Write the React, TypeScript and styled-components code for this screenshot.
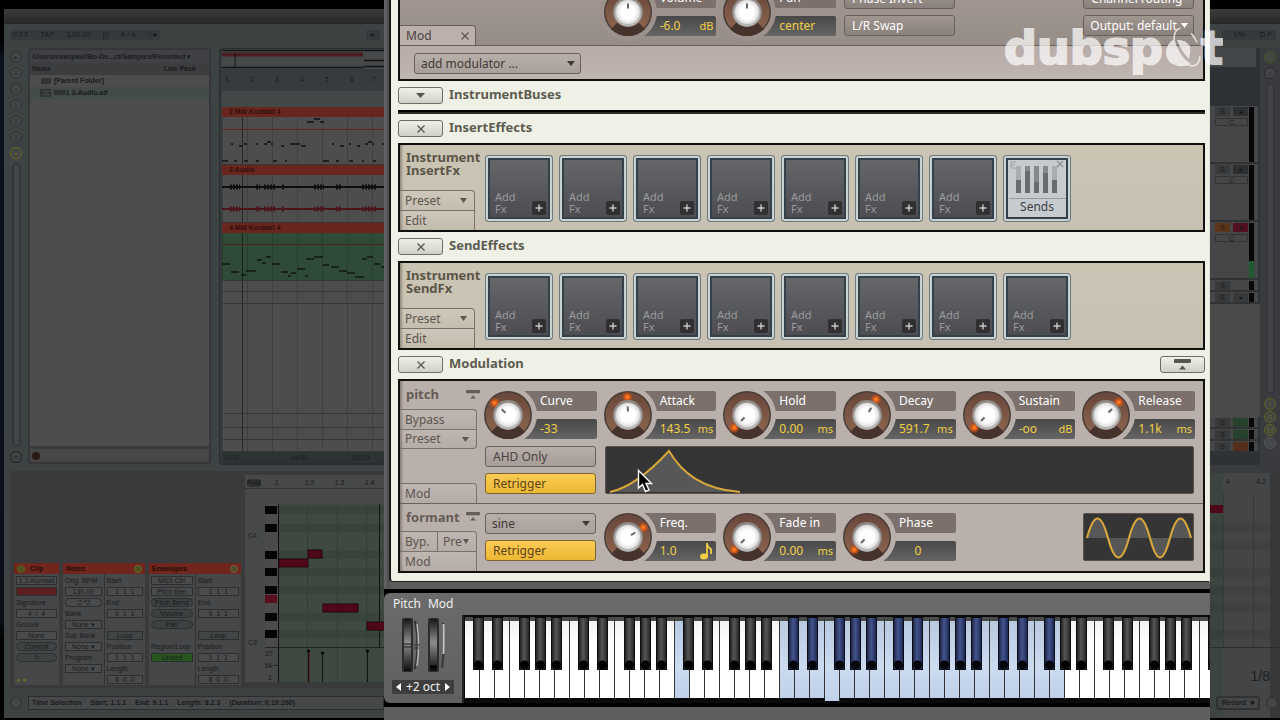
import React from "react";
import styled, { createGlobalStyle, css } from "styled-components";

const GlobalStyle = createGlobalStyle`
  * { box-sizing: border-box; }
  html, body { margin: 0; background: #000; }
  body { font-family: "Noto Sans", "Open Sans", sans-serif; font-size: 12px; }
  button, input, select { font: inherit; color: inherit; margin: 0; padding: 0; border: 0; background: none; border-radius: 0; }
  ul { list-style: none; margin: 0; padding: 0; }
  h2, h3, p { margin: 0; font: inherit; }
  svg { display: block; }
`;

/* ---------- page ---------- */

const Desktop = styled.main`
  position: relative;
  display: grid;
  grid-template-columns: 384px minmax(0, 1fr) 70px;
  min-height: 100vh;
  background: #000;
  overflow: hidden;
`;

/* ---------- sampler window ---------- */

const Sampler = styled.section`
  display: flex;
  flex-direction: column;
  background: #5f5f5f;
  color: #4a423f;
`;

const RackFrame = styled.div`
  padding: 0 0 7px 5px;
  background: linear-gradient(90deg, #66656a, #4f4f50 5px, #5c5d5c 6px);
  border-bottom: 4px solid #000;
`;

const Rack = styled.div`
  padding: 0 4px 8px 7px;
  background: #eff1e6;
  border-left: 2px solid #17191a;
  border-bottom: 1px solid #20241f;
  border-right: 1px solid #dfe3d8;
  border-bottom-left-radius: 4px;
`;

const Panel = styled.div<{ $tone: string; $open?: boolean }>`
  border: 2px solid #10100e;
  ${(p) => p.$open && "border-top: 0;"}
  background: ${(p) => p.$tone};
  box-shadow: inset 3px 0 2px -1px rgba(60, 50, 40, 0.35);
`;

const SectionHead = styled.header`
  display: flex;
  align-items: center;
  gap: 6px;
  height: 29px;
`;

const SectionTitle = styled.h2`
  flex: 1;
  font-size: 13px;
  font-weight: 700;
  line-height: 16px;
  color: #5d5b50;
  padding-bottom: 4px;
`;

const SmallButton = styled.button`
  display: flex;
  align-items: center;
  justify-content: center;
  width: 45px;
  height: 17px;
  border: 1px solid #6d6f66;
  border-radius: 3px;
  background: linear-gradient(#f0f1ea, #cfd0c6);
  color: #55564f;
`;

const Divider = styled.div`
  height: 4px;
  background: linear-gradient(#000 2px, #2b2b24 2px);
`;

const Triangle = ({ size = 9, up = false }: { size?: number; up?: boolean }) => (
  <svg width={size} height={5} viewBox="0 0 10 5" preserveAspectRatio="none" aria-hidden="true">
    <path d={up ? "M0 5L5 0L10 5Z" : "M0 0H10L5 5Z"} fill="currentColor" />
  </svg>
);

const Cross = () => (
  <svg width="8" height="8" viewBox="0 0 8 8" aria-hidden="true">
    <path d="M0.5 0.5L7.5 7.5M7.5 0.5L0.5 7.5" stroke="currentColor" strokeWidth="1.200" />
  </svg>
);

const CollapseIcon = () => (
  <svg width="17" height="11" viewBox="0 0 17 11" aria-hidden="true">
    <rect width="17" height="4" rx="1" fill="currentColor" />
    <path d="M5 10.500L8.500 6.500L12 10.500Z" fill="currentColor" />
  </svg>
);

/* top strip with output controls */

const TopStrip = styled.div`
  display: flex;
  align-items: flex-end;
  gap: 9px;
  height: 46px;
  overflow: hidden;
  border-bottom: 1px solid #6b5f5a;
  background: linear-gradient(#a0968f, #978d88);
`;

const ModTab = styled.div`
  display: flex;
  flex: 0 0 76px;
  align-items: center;
  justify-content: space-between;
  height: 20px;
  padding: 0 6px;
  border: 1px solid #6b5f5a;
  border-left: 0;
  border-bottom: 0;
  border-top-right-radius: 4px;
  background: #bbb0ac;
  line-height: 18px;
`;

const IconButton = styled.button`
  display: flex;
  color: #5c534f;
`;

const ModStrip = styled.div`
  padding: 7px 14px 5px;
  background: linear-gradient(#b8aca8, #bfb4b0);
`;

const ParamGrid = styled.div<{ $pad?: string }>`
  flex: 1;
  display: grid;
  grid-template-columns: repeat(6, minmax(0, 1fr));
  gap: 7px 8px;
  min-width: 0;
  padding: ${(p) => p.$pad ?? "0"};
`;

const Stack = styled.div`
  display: flex;
  flex-direction: column;
  justify-content: space-between;
  height: 48px;
  padding-right: 1px;
`;

const RackButton = styled.button<{ $look?: "lit" | "light" }>`
  height: 21px;
  padding: 0 7px;
  border: 1px solid #6a605b;
  border-radius: 3px;
  background: linear-gradient(#b9afaa, #a69c98);
  color: #4a423f;
  line-height: 18px;
  text-align: left;
  white-space: nowrap;
  ${(p) =>
    p.$look === "lit" &&
    css`
      background: linear-gradient(#fbcb54, #edb834);
      border-color: #7c6430;
      color: #5b4318;
    `}
  ${(p) =>
    p.$look === "light" &&
    css`
      background: linear-gradient(#a0958f, #8b817c);
      color: #fff;
    `}
`;

const SelectBox = styled.div<{ $width?: string; $look?: "light" }>`
  position: relative;
  width: ${(p) => p.$width ?? "100%"};
  color: ${(p) => (p.$look === "light" ? "#fff" : "#3f3835")};
  select {
    display: block;
    width: 100%;
    height: 21px;
    padding: 0 6px;
    appearance: none;
    border: 1px solid #6a605b;
    border-radius: 3px;
    background: ${(p) => (p.$look === "light" ? "linear-gradient(#a0958f, #8b817c)" : "linear-gradient(#b9afaa, #aaa09b)")};
    line-height: 18px;
  }
  svg {
    position: absolute;
    right: 6px;
    top: 8px;
    pointer-events: none;
  }
`;

const Select = ({ label, value, width, look }: { label: string; value: string; width?: string; look?: "light" }) => (
  <SelectBox $width={width} $look={look}>
    <select aria-label={label} defaultValue={value}>
      <option>{value}</option>
    </select>
    <Triangle size={look ? 7 : 8} />
  </SelectBox>
);

/* knob with caption and readout */

const ParamBox = styled.div`
  position: relative;
  display: flex;
  height: 48px;
`;

const KnobSvg = styled.svg`
  position: relative;
  flex: 0 0 48px;
  margin-left: -1px;
  overflow: visible;
`;

const ParamText = styled.div`
  flex: 1;
  display: flex;
  flex-direction: column;
  justify-content: space-between;
  min-width: 0;
  margin-left: -12px;
  order: 1;
`;

const Caption = styled.div`
  height: 20px;
  padding-left: 20px;
  border-radius: 2px;
  background: #7b706c;
  color: #fff;
  line-height: 19px;
  white-space: nowrap;
`;

const Readout = styled.output<{ $spread?: boolean }>`
  display: flex;
  justify-content: ${(p) => (p.$spread ? "center" : "space-between")};
  align-items: center;
  height: 20px;
  padding: 0 3px 0 ${(p) => (p.$spread ? "4px" : "20px")};
  border-radius: 2px;
  background: linear-gradient(#484848, #656565);
  color: #f2cf45;
  line-height: 20px;
  white-space: nowrap;
`;

const Unit = styled.span`
  font-size: 11px;
`;

type ParamProps = {
  name: string;
  value: string;
  unit?: React.ReactNode;
  angle: number;
  ground?: string;
  glow?: boolean;
  centred?: boolean;
};

const Param = ({ name, value, unit, angle, ground = "#b9b0ab", glow = true, centred }: ParamProps) => (
  <ParamBox>
    <ParamText>
      <Caption>{name}</Caption>
      <Readout $spread={centred}>
        <span>{value}</span>
        {unit && <Unit>{unit}</Unit>}
      </Readout>
    </ParamText>
    <KnobSvg width="48" height="48" viewBox="0 0 48 48" role="img" aria-label={`${name} knob`}>
      <defs>
        <radialGradient id="cap">
          <stop offset="0.6" stopColor="#fff" />
          <stop offset="1" stopColor="#dcdcdc" />
        </radialGradient>
        <radialGradient id="spark">
          <stop offset="0" stopColor="#ff9236" />
          <stop offset="0.35" stopColor="#ee5f14" />
          <stop offset="1" stopColor="#a0441c" stopOpacity="0" />
        </radialGradient>
        <linearGradient id="ring" x2="0" y2="1">
          <stop offset="0" stopColor="#6b493c" />
          <stop offset="1" stopColor="#8c654f" />
        </linearGradient>
      </defs>
      <circle cx="24" cy="24" r="29" fill={ground} />
      <circle cx="24" cy="24" r="24" fill="#4a3d38" />
      <circle cx="24" cy="24" r="18.500" fill="none" stroke="url(#ring)" strokeWidth="8" />
      <path d="M24 24L7 41A24 24 0 0 0 41 41Z" fill="#46332c" />
      {glow && (
        <g transform={`rotate(${angle} 24 24)`}>
          <circle cx="24" cy="6" r="6" fill="url(#spark)" />
        </g>
      )}
      <circle cx="24" cy="24" r="15" fill="#8f8986" />
      <circle cx="24" cy="25" r="13.500" fill="#b9b7b6" />
      <circle cx="24" cy="24" r="12" fill="url(#cap)" />
      <path d="M24 15.500V20.500" stroke="#666" strokeWidth="2" transform={`rotate(${angle} 24 24)`} />
    </KnobSvg>
  </ParamBox>
);

/* effect slots */

const FxRow = styled.div`
  display: flex;
  height: 85px;
`;

const Side = styled.div`
  display: flex;
  flex: 0 0 85px;
  flex-direction: column;
`;

const SideTitle = styled.h3`
  flex: 1;
  padding: 6px 0 0 6px;
  color: #5b5548;
  font-size: 13px;
  font-weight: 700;
  line-height: 13px;
`;

const SideTab = styled.button<{ $width: number; $cap?: boolean; $foot?: boolean }>`
  display: flex;
  align-items: center;
  justify-content: space-between;
  width: ${(p) => p.$width}px;
  height: 20px;
  padding: 0 7px 0 5px;
  border: solid #7a716a;
  border-width: 1px 1px ${(p) => (p.$foot ? "1px" : "0")} 0;
  ${(p) => p.$cap && "border-top-right-radius: 4px;"}
  ${(p) => p.$foot && "border-bottom-right-radius: 4px;"}
  background: linear-gradient(rgba(255, 255, 255, 0.08), rgba(0, 0, 0, 0.02));
  color: #5c544d;
  line-height: 18px;
  white-space: nowrap;
`;

const Slots = styled.ul`
  display: flex;
  flex-wrap: wrap;
  gap: 6px;
  padding-top: 10px;
  overflow: hidden;
`;

const SlotButton = styled.button<{ $filled?: boolean }>`
  display: flex;
  flex-direction: ${(p) => (p.$filled ? "column" : "row")};
  align-items: ${(p) => (p.$filled ? "center" : "flex-end")};
  justify-content: space-between;
  width: 68px;
  height: 67px;
  padding: ${(p) => (p.$filled ? "2px 2px 0" : "0 3px 3px 9px")};
  border: 1px solid #6d7b80;
  border-radius: 3px;
  outline: 2px solid #34414a;
  outline-offset: -5px;
  box-shadow: inset 0 0 0 2px #c9d2d0;
  background: ${(p) => (p.$filled ? "#c6cbd0" : "linear-gradient(#66686a, #4b4b50)")};
  color: ${(p) => (p.$filled ? "#3d3f44" : "#9a9a9a")};
  text-align: left;
`;

const SlotLabel = styled.span`
  padding-bottom: 3px;
  font-size: 11px;
  line-height: 12px;
`;

const Plus = styled.span`
  display: flex;
  align-items: center;
  justify-content: center;
  width: 14px;
  height: 14px;
  margin: 0 3px 3px 0;
  border-radius: 2px;
  background: #303033;
`;

const SendsName = styled.span`
  width: 57px;
  padding-bottom: 6px;
  border-top: 1px solid #9a9da1;
  line-height: 16px;
  text-align: center;
`;

const EmptySlot = () => (
  <li>
    <SlotButton>
      <SlotLabel>
        Add
        <br />
        Fx
      </SlotLabel>
      <Plus>
        <svg width="8" height="8" aria-hidden="true">
          <path d="M4 0.500V7.500M0.500 4H7.500" stroke="#c9c9c9" strokeWidth="1.400" />
        </svg>
      </Plus>
    </SlotButton>
  </li>
);

const SendsSlot = () => (
  <li>
    <SlotButton $filled>
      <svg width="57" height="40" aria-hidden="true">
        <path d="M2 4H7M2 7H6M2 10H7M2 4V10" stroke="#9ea2a6" fill="none" />
        <path d="M48 3L54 9M54 3L48 9" stroke="#8c9095" strokeWidth="1.300" />
        {[7, 16, 25, 34, 43].map((x, i) => (
          <g key={x}>
            <rect x={x} y="8" width="5" height="27" fill={i === 0 || i === 4 ? "#a9adb0" : "#85898c"} />
            <rect x={x} y={[22, 13, 24, 15, 22][i]} width="5" height={[13, 22, 11, 20, 13][i]} fill="#686b6f" />
          </g>
        ))}
      </svg>
      <SendsName>Sends</SendsName>
    </SlotButton>
  </li>
);

const FxPanel = ({ name, count, sends }: { name: string; count: number; sends?: boolean }) => (
  <Panel $tone="linear-gradient(#cbc5b4, #c7c1b3)">
    <FxRow>
      <Side>
        <SideTitle>
          Instrument
          <br />
          {name}
        </SideTitle>
        <SideTab $width={75} $cap>
          Preset <Triangle size={7} />
        </SideTab>
        <SideTab $width={75}>Edit</SideTab>
      </Side>
      <Slots>
        {Array.from({ length: count }, (_, i) => (
          <EmptySlot key={i} />
        ))}
        {sends && <SendsSlot />}
      </Slots>
    </FxRow>
  </Panel>
);

/* modulation */

const ModRow = styled.div<{ $line?: boolean }>`
  display: flex;
  ${(p) => p.$line && "border-bottom: 1px solid #6d5f59;"}
`;

const ModName = styled.div<{ $height: number }>`
  display: flex;
  align-items: center;
  justify-content: space-between;
  width: 80px;
  height: ${(p) => p.$height}px;
  padding: 0 0 2px 6px;
  color: #665c57;
  font-size: 13px;
  font-weight: 700;
  line-height: 16px;
  svg { width: 14px; }
`;

const Spacer = styled.div`
  flex: 1;
`;

const TabPair = styled.div`
  display: flex;
`;

const Display = styled.div<{ $span?: string }>`
  grid-column: ${(p) => p.$span ?? "auto"};
  height: 48px;
  margin-right: 1px;
  border: 1px solid #5a524e;
  border-radius: 2px;
  background: #353535;
  overflow: hidden;
`;

const Cursor = styled.svg`
  position: absolute;
  left: 637px;
  top: 469px;
`;

/* keyboard */

const KeyPanel = styled.div`
  display: flex;
  height: 110px;
  border-radius: 6px 0 0 6px;
  background: linear-gradient(#6b6b6b, #606060);
`;

const KeyShell = styled.div`
  background: #000;
  border-bottom: 4px solid #000;
`;

const WheelArea = styled.div`
  display: flex;
  flex: 0 0 78px;
  flex-direction: column;
  gap: 5px;
  padding: 2px 8px 9px;
  color: #f0f0f0;
`;

const WheelNames = styled.div`
  display: flex;
  gap: 7px;
  padding-left: 1px;
  line-height: 18px;
`;

const Octave = styled.div`
  display: flex;
  align-items: center;
  justify-content: space-between;
  width: 62px;
  height: 14px;
  margin-top: auto;
  padding: 0 4px;
  background: #3d3d3d;
  line-height: 14px;
  white-space: nowrap;
  button { display: flex; }
`;

const Keys = styled.ul`
  flex: 1;
  display: flex;
  min-width: 0;
  margin-top: 22px;
  padding: 2px 0 5px 1px;
  overflow: hidden;
  border-left: 2px solid #222;
  background: #0a0a0a;
`;

const KeySlot = styled.li`
  position: relative;
  flex: 0 0 15px;
`;

const WhiteKey = styled.button<{ $blue?: boolean; $down?: boolean }>`
  display: block;
  width: 15px;
  height: ${(p) => (p.$down ? 84 : 81)}px;
  border-top: 4px solid #4a4a48;
  border-right: 1px solid #333;
  background: ${(p) => (p.$blue ? "linear-gradient(#b9c9e0, #cbdbf0 60%, #bfd0e8)" : "linear-gradient(#f2f2f2, #fff 30%)")};
`;

const BlackKey = styled.button<{ $x: number; $blue?: boolean }>`
  position: absolute;
  z-index: 1;
  left: ${(p) => p.$x}px;
  top: 0;
  width: 11px;
  height: 53px;
  border: 1px solid #0c0c10;
  background: ${(p) =>
    p.$blue
      ? "radial-gradient(circle at 50% 47px, #05060c 4px, transparent 5px), linear-gradient(90deg, #1d2748, #44558c 45%, #1e2a58)"
      : "radial-gradient(circle at 50% 47px, #000 4px, transparent 5px), linear-gradient(90deg, #222, #565656 45%, #262626)"};
`;

const BLACK_OFFSETS: Record<number, number> = { 0: 8, 1: 12, 3: 9, 4: 10, 5: 11 };

const Keyboard = () => (
  <Keys aria-label="Keyboard">
    {Array.from({ length: 75 }, (_, i) => {
      const blue = i === 14 || (i >= 21 && i < 40);
      const offset = BLACK_OFFSETS[i % 7];
      return (
        <KeySlot key={i}>
          <WhiteKey $blue={blue} $down={i === 24} aria-label={`White key ${i + 1}`} />
          {offset !== undefined && <BlackKey $x={offset} $blue={i >= 21 && i < 39} aria-label={`Black key ${i + 1}`} />}
        </KeySlot>
      );
    })}
  </Keys>
);

const Wheels = () => (
  <svg width="62" height="54" viewBox="0 0 62 54" role="img" aria-label="Pitch and modulation wheels">
    <defs>
      <linearGradient id="wheel" x2="0" y2="1">
        <stop offset="0" stopColor="#181818" />
        <stop offset="0.45" stopColor="#8c8c8c" />
        <stop offset="0.55" stopColor="#777" />
        <stop offset="1" stopColor="#0d0d0d" />
      </linearGradient>
    </defs>
    <rect x="10" y="0" width="11" height="54" rx="2" fill="#2c2c2c" />
    <rect x="12" y="1" width="7" height="52" fill="url(#wheel)" />
    <path d="M11 26H20M11 29H20" stroke="#222" />
    <path d="M23 3Q28 27 23 51" fill="none" stroke="#333" strokeWidth="2" />
    <path d="M25 6Q28 27 25 48" fill="none" stroke="#b5b5b5" strokeWidth="1.500" />
    <path d="M22 27H28M22 30H27" stroke="#333" />
    <rect x="36" y="0" width="11" height="54" rx="2" fill="#2c2c2c" />
    <rect x="38" y="1" width="7" height="52" fill="url(#wheel)" />
    <path d="M38 49H45" stroke="#000" strokeWidth="3" />
    <path d="M50 50Q53 27 51 5" fill="none" stroke="#3d3d3d" strokeWidth="2.500" />
    <path d="M51.500 6Q52 18 51.500 36" fill="none" stroke="#c5c5c5" strokeWidth="2" />
  </svg>
);

/* ---------- dimmed sequencer behind the sampler ---------- */

const Daw = styled.section<{ $left?: boolean }>`
  display: flex;
  flex-direction: column;
  min-width: 0;
  padding: 9px 0 8px ${(p) => (p.$left ? "4px" : "0")};
  background: ${(p) => (p.$left ? "linear-gradient(#000 40px, #0b1320 60px, #0a0e17 620px, #000 640px)" : "#000")};
  color: #1a1b1c;
  font-family: "Liberation Sans", sans-serif;
  font-size: 7px;
  line-height: 10px;
  overflow: hidden;
  white-space: nowrap;
`;

const DawBody = styled.div`
  flex: 1;
  display: flex;
  flex-direction: column;
  background: #3d4243;
`;

const DawTitle = styled.div`
  height: 15px;
  background: linear-gradient(#3a3a3a, #2a2a2b);
  border-bottom: 1px solid #242525;
`;

const Transport = styled.div`
  display: flex;
  align-items: center;
  justify-content: space-between;
  height: 24px;
  padding: 0 4px 2px 6px;
`;

const TransportBox = styled.div<{ $width: number; $wide?: boolean }>`
  display: flex;
  gap: 6px;
  align-items: center;
  justify-content: ${(p) => (p.$wide ? "space-between" : "center")};
  width: ${(p) => p.$width}px;
  height: 10px;
  padding: 0 3px;
  border-radius: 2px;
  background: #36393b;
  color: #1a1c1d;
  font-size: 8px;
`;

const DawMain = styled.div`
  display: flex;
  height: 418px;
  gap: 2px;
`;

const IconColumn = styled.div`
  display: flex;
  flex: 0 0 22px;
  flex-direction: column;
  align-items: center;
  gap: 4px;
  padding: 3px 0 3px 2px;
`;

const RoundButton = styled.button<{ $color?: string }>`
  flex: 0 0 12px;
  width: 12px;
  height: 12px;
  border: 1px solid ${(p) => p.$color ?? "#2f3133"};
  border-radius: 6px;
  background: #444546;
  color: ${(p) => p.$color ?? "#2f3133"};
  font-size: 8px;
  line-height: 9px;
  text-align: center;
`;

const Track = styled.div`
  flex: 1;
  width: 9px;
  border-radius: 5px;
  background: #434445;
  border: 2px solid #36363a;
`;

const Browser = styled.div`
  display: flex;
  flex: 0 0 183px;
  flex-direction: column;
  min-width: 0;
  height: 416px;
  border: 2px solid #35353a;
  border-radius: 3px;
  background: #4d4d4d;
  font-weight: 700;
  overflow: hidden;
`;

const BrowserLine = styled.div<{ $tone?: string; $height?: number }>`
  display: flex;
  align-items: center;
  gap: 3px;
  height: ${(p) => p.$height ?? 12}px;
  padding: 0 13px 0 2px;
  background: ${(p) => p.$tone ?? "none"};
`;

const BrowserFoot = styled.div`
  display: flex;
  align-items: center;
  height: 16px;
  padding-left: 2px;
  border-top: 3px solid #393a3b;
  background: #474748;
`;

const BrownDot = styled.span`
  width: 8px;
  height: 8px;
  border-radius: 4px;
  background: #2a1a14;
`;

const Arrangement = styled.div`
  display: flex;
  flex: 1;
  flex-direction: column;
  min-width: 0;
  height: 417px;
  margin-left: 6px;
  padding: 1px 0 0 2px;
  border: solid #2a2d30;
  border-width: 1px 0 2px 1px;
  border-radius: 4px 0 0 4px;
  background: #34393c;
  overflow: hidden;
`;

const Ruler = styled.div<{ $height: number; $tone: string; $step?: number }>`
  display: flex;
  align-items: center;
  height: ${(p) => p.$height}px;
  background: ${(p) => p.$tone};
  span { flex: 0 0 ${(p) => p.$step ?? 25}px; padding-left: 3px; }
`;

const ClipHead = styled.div`
  height: 10px;
  padding-left: 7px;
  background: #68261e;
  color: #30100d;
  font-weight: 700;
`;

const Lane = styled.div<{ $height?: number; $tone?: string; $line?: string }>`
  ${(p) => (p.$height ? `height: ${p.$height}px;` : "flex: 1;")}
  background-color: ${(p) => p.$tone ?? "#4d4d4d"};
  background-image: linear-gradient(90deg, rgba(0, 0, 0, 0.16) 1px, transparent 1px), linear-gradient(90deg, transparent 20px, rgba(0, 0, 0, 0.5) 20px, rgba(0, 0, 0, 0.5) 21px, transparent 21px);
  background-size: 25px 100%, 100% 100%;
  border-bottom: 1px solid ${(p) => p.$line ?? "#363636"};
  overflow: hidden;
`;

const dashes = (list: number[][]) => list.map(([x, y, w]) => `M${x} ${y}h${w}`).join("");

const ArrangeView = () => (
  <Arrangement>
    <svg width="166" height="19" aria-hidden="true">
      <rect width="166" height="19" fill="#46484a" />
      <path d="M0 0.500H166M0 17.500H142M142 10.500H166M142 16.500H166" stroke="#141414" strokeWidth="1.500" />
      <path d="M0 4.500H141" stroke="#4b1d20" strokeWidth="4" />
      <path d="M13 3V17" stroke="#151515" />
    </svg>
    <Ruler $height={22} $tone="#353b3f">
      {[1, 2, 3, 4, 5, 6].map((n) => (
        <span key={n}>{n}</span>
      ))}
      7
    </Ruler>
    <Ruler $height={16} $tone="#414847" />
    <ClipHead>2 Mid Kontakt 4</ClipHead>
    <Lane $height={13} $line="#5c2420">
      <svg width="166" height="12" aria-hidden="true">
        <path d={dashes([[85, 5, 7], [92, 2, 6], [98, 5, 4]])} stroke="#111" strokeWidth="1.500" />
      </svg>
    </Lane>
    <Lane $height={35}>
      <svg width="166" height="34" aria-hidden="true">
        <path
          d={dashes([[9, 14, 2], [17, 16, 4], [22, 14, 3], [34, 14, 2], [42, 14, 3], [45, 12, 4], [49, 14, 2], [59, 16, 3], [68, 14, 4], [72, 14, 6], [79, 16, 5], [110, 14, 2], [118, 16, 4], [127, 14, 2], [135, 16, 3], [143, 14, 3], [146, 12, 4], [150, 14, 2], [160, 14, 3], [0, 31, 6], [12, 31, 3], [22, 31, 4], [34, 31, 3], [51, 31, 4], [63, 31, 2], [101, 31, 6], [114, 31, 3], [127, 31, 4], [140, 31, 2], [151, 31, 3]])}
          stroke="#111"
          strokeWidth="1.500"
        />
      </svg>
    </Lane>
    <ClipHead>3 Audio</ClipHead>
    <Lane $height={48}>
      <svg width="166" height="47" aria-hidden="true">
        {[12, 34].map((y, i) => (
          <g key={y} stroke={i ? "#4a1418" : "#0e0e0e"}>
            <path d={`M0 ${y}H166`} strokeWidth="2" />
            <path d={`M8 ${y}h10M34 ${y}h4M42 ${y}h12M60 ${y}h3M92 ${y}h10M114 ${y}h6M140 ${y}h14`} strokeWidth="5" strokeDasharray="2 1" />
          </g>
        ))}
      </svg>
    </Lane>
    <ClipHead>4 Mid Kontakt 4</ClipHead>
    <Lane $height={12} $tone="#2f4b38" $line="#4b241c" />
    <Lane $height={36} $tone="#304a38">
      <svg width="166" height="35" aria-hidden="true">
        <path
          d={dashes([[0, 19, 8], [9, 27, 8], [19, 30, 5], [24, 26, 10], [35, 15, 5], [40, 18, 4], [44, 12, 5], [50, 19, 8], [59, 27, 7], [66, 31, 3], [69, 28, 5], [75, 24, 8], [83, 31, 3], [84, 14, 8], [92, 12, 9], [101, 20, 6], [109, 22, 8], [117, 26, 8], [125, 28, 8], [133, 32, 9], [140, 14, 5], [145, 12, 6], [152, 19, 6], [159, 22, 5]])}
          stroke="#101511"
          strokeWidth="1.500"
        />
      </svg>
    </Lane>
    <Lane $height={11} />
    <Lane $height={12} />
    <Lane />
    <Lane $height={14} />
    <Lane $height={12} />
    <Lane $height={12} />
    <Ruler $height={11} $tone="#2d3234" $step={65}>
      <span>0:00</span>
      <span>14:00</span>
      16:00
    </Ruler>
  </Arrangement>
);

const DetailArea = styled.div`
  display: flex;
  flex: 1;
  align-items: stretch;
  margin: 5px 0 7px 6px;
  background: #3a3a3d;
`;

const Devices = styled.div`
  display: flex;
  flex: 0 0 235px;
  align-items: flex-end;
  gap: 4px;
  padding: 0 4px 3px 4px;
`;

const Device = styled.div<{ $width: number }>`
  flex: 0 0 ${(p) => p.$width}px;
  height: 122px;
  background: #464748;
`;

const DeviceHead = styled.div`
  display: flex;
  align-items: center;
  justify-content: space-between;
  gap: 5px;
  height: 11px;
  padding: 0 3px;
  background: #70261c;
  color: #270d0a;
  font-weight: 700;
  button { flex-basis: 8px; width: 8px; height: 8px; background: #4e4f22; }
`;

const DeviceCols = styled.div`
  display: flex;
`;

const DeviceCol = styled.div`
  flex: 1;
  display: flex;
  flex-direction: column;
  gap: 2px;
  min-width: 0;
  padding: 2px;
  & + & { border-left: 1px solid #333; }
`;

const fieldTone = css<{ $tone?: string }>`
  width: 100%;
  height: 9px;
  border: 1px solid #2d2e2f;
  background: ${(p) => p.$tone ?? "#4a4b4c"};
  text-align: center;
  line-height: 7px;
`;

const Field = styled.input<{ $tone?: string }>`
  ${fieldTone}
`;

const Pill = styled.button<{ $tone?: string; $square?: boolean }>`
  ${fieldTone}
  border-radius: ${(p) => (p.$square ? "0" : "5px")};
`;

const Label = styled.p<{ $tone?: string }>`
  height: 9px;
  line-height: 9px;
  color: ${(p) => p.$tone ?? "inherit"};
`;

const PositionColumn = ({ owner }: { owner: string }) => (
  <DeviceCol>
    <Label>Start</Label>
    <Field aria-label={`${owner} start`} defaultValue="1  1  1" />
    <Label>End</Label>
    <Field aria-label={`${owner} end`} defaultValue="9  1  1" />
    <Label />
    <Pill $square $tone="#414546">
      Loop
    </Pill>
    <Label>Position</Label>
    <Field aria-label={`${owner} position`} defaultValue="1  1  1" />
    <Label>Length</Label>
    <Field aria-label={`${owner} length`} defaultValue="8  0  0" />
  </DeviceCol>
);

const Roll = styled.div`
  flex: 1;
  display: flex;
  flex-direction: column;
  min-width: 0;
  margin: 4px 0 6px;
  background: #474848;
`;

const RollHead = styled.div`
  display: flex;
  align-items: center;
  height: 14px;
  padding: 3px 0 0 2px;
  border-bottom: 1px solid #333;
  span { flex: 0 0 30px; }
`;

const RollBadge = styled.button`
  width: 20px;
  height: 8px;
  margin-right: 14px;
  border-radius: 3px;
  background: #2f3133;
  line-height: 8px;
`;

const RollBody = styled.div`
  display: flex;
  flex: 1;
  padding-top: 15px;
`;

const RollLabels = styled.div`
  display: flex;
  flex: 0 0 20px;
  flex-direction: column;
  gap: 97px;
  padding: 27px 0 2px 3px;
`;

const VelocityLabels = styled.svg`
  margin-top: auto;
`;

const DawStatus = styled.div`
  display: flex;
  align-items: center;
  gap: 6px;
  height: 20px;
  margin-bottom: 3px;
  padding: 0 0 4px 6px;
`;

const StatusBox = styled.div`
  display: flex;
  flex: 1;
  align-items: center;
  gap: 9px;
  height: 14px;
  padding: 0 3px;
  border: 1px solid #2b2c2d;
  background: #47484a;
  font-weight: 700;
`;

const PianoRoll = () => (
  <Roll>
    <RollHead>
      <RollBadge>Fold</RollBadge>
      <span>1</span>
      <span>1.2</span>
      <span>1.3</span>
      <span>1.4</span>
    </RollHead>
    <RollBody>
      <RollLabels>
        <span>C4</span>
        <span>C3</span>
      </RollLabels>
      <svg width="120" height="178" aria-hidden="true">
        <rect x="0" width="13" height="143" fill="#4b4b4b" />
        <rect x="14" width="106" height="178" fill="#3d4941" />
        {[2, 20, 47, 64, 82, 109, 126].map((y) => (
          <g key={y}>
            <rect y={y} width="12" height="8" fill="#050505" />
            <rect x="14" y={y} width="106" height="8" fill="#38433c" />
          </g>
        ))}
        <rect y="91" width="12" height="8" fill="#5a0d1c" />
        <path d="M42.500 0V178M72.500 0V178M101.500 0V178" stroke="#333c36" />
        <path d="M13.500 0V178M114.500 0V143" stroke="#111" />
        <path d="M0 143.500H120" stroke="#222" />
        <g fill="#4f0817" stroke="#24040b">
          <rect x="14" y="55" width="29" height="8" />
          <rect x="43" y="46" width="14" height="8" />
          <rect x="58" y="100" width="35" height="8" />
          <rect x="102" y="118" width="20" height="8" />
        </g>
        <path d="M43.500 147V178M57.500 149V178M102.500 147V178" stroke="#141414" />
        <path d="M44.500 147V178" stroke="#5a2a20" />
        <circle cx="43.500" cy="147" r="1.500" />
        <circle cx="57.500" cy="149" r="1.500" />
        <circle cx="102.500" cy="147" r="1.500" />
        <path d="M8 161.500H13" stroke="#222" />
        <g fill="#1a1b1c" fontSize="7" textAnchor="end">
          <text x="8" y="152">127</text>
          <text x="7" y="164">64</text>
          <text x="7" y="176">1</text>
        </g>
      </svg>
    </RollBody>
  </Roll>
);

const DawLeft = () => (
  <Daw $left aria-label="Sequencer">
    <DawTitle />
    <DawBody>
      <Transport>
        <TransportBox $width={150} $wide>
          <span>EXT</span>
          <span>TAP</span>
          <span>128.00</span>
          <span>|||</span>
          <span>4 / 4</span>
          <span>○●</span>
        </TransportBox>
        <TransportBox $width={14}>▸</TransportBox>
      </Transport>
      <DawMain>
        <IconColumn>
          {["▸", "≡", "◦", "1", "2", "3"].map((g) => (
            <RoundButton key={g}>{g}</RoundButton>
          ))}
          <RoundButton $color="#6b6820">•</RoundButton>
          <Track />
          <RoundButton $color="#1d1f20">≈</RoundButton>
        </IconColumn>
        <Browser>
          <BrowserLine $tone="#404144" $height={13}>
            /Users/evanpaul/Bo-De...ct/Samples/Recorded ▾
          </BrowserLine>
          <BrowserLine $tone="#3c3d3f">
            Name
            <Spacer />
            Live Pack
          </BrowserLine>
          <BrowserLine>
            <svg width="19" height="8" aria-hidden="true">
              <rect x="9" y="1" width="10" height="6" fill="#333" />
            </svg>
            [Parent Folder]
          </BrowserLine>
          <BrowserLine $tone="#434b48">
            <svg width="19" height="8" aria-hidden="true">
              <rect x="9" y="1" width="10" height="6" fill="none" stroke="#222" />
              <path d="M9 4H19" stroke="#222" />
            </svg>
            0001 3-Audio.aif
          </BrowserLine>
          <Spacer />
          <BrowserFoot>
            <BrownDot />
          </BrowserFoot>
        </Browser>
        <ArrangeView />
      </DawMain>
      <DetailArea>
        <Devices>
          <Device $width={45}>
            <DeviceHead>
              <RoundButton aria-label="Clip on" $color="#5e5b1e" />
              Clip
              <Spacer />
            </DeviceHead>
            <DeviceCol>
              <Field aria-label="Clip name" defaultValue="1 2-Kontakt" />
              <Field aria-label="Clip colour" $tone="#5e1f22" />
              <Label>Signature</Label>
              <Field aria-label="Signature" defaultValue="4  /  4" />
              <Label>Groove</Label>
              <Field aria-label="Groove" defaultValue="None" />
              <Pill $tone="#404344">Commit</Pill>
              <Pill $tone="#404344">↻</Pill>
              <Label />
              <Label $tone="#6b6a20">●  ●</Label>
            </DeviceCol>
          </Device>
          <Device $width={82}>
            <DeviceHead>
              Notes
              <RoundButton aria-label="Fold notes" $color="#6b6a28" />
            </DeviceHead>
            <DeviceCols>
              <DeviceCol>
                <Label>Orig. BPM</Label>
                <Field aria-label="Original tempo" defaultValue="130.00" />
                <Pill>:2   *2</Pill>
                <Label>Bank</Label>
                <Field aria-label="Bank" defaultValue="None ▾" />
                <Label>Sub Bank</Label>
                <Field aria-label="Sub bank" defaultValue="None ▾" />
                <Label>Program</Label>
                <Field aria-label="Program" defaultValue="None ▾" />
              </DeviceCol>
              <PositionColumn owner="Notes" />
            </DeviceCols>
          </Device>
          <Device $width={92}>
            <DeviceHead>
              Envelopes
              <RoundButton aria-label="Fold envelopes" $color="#7a5a50" />
            </DeviceHead>
            <DeviceCols>
              <DeviceCol>
                <Field aria-label="Envelope device" defaultValue="MIDI Ctrl" />
                <Field aria-label="Envelope control" defaultValue="Pitch Ben" />
                <Pill $tone="#3c4142">Pitch Bend</Pill>
                <Pill $tone="#3c4142">Volume</Pill>
                <Pill $tone="#3c4142">Pan</Pill>
                <Label />
                <Label>Region/Loop</Label>
                <Pill $square $tone="#27561f">
                  Linked
                </Pill>
              </DeviceCol>
              <PositionColumn owner="Envelope" />
            </DeviceCols>
          </Device>
        </Devices>
        <PianoRoll />
      </DetailArea>
      <DawStatus>
        <RoundButton aria-label="Info" />
        <StatusBox>
          <span>Time Selection</span>
          <span>Start: 1.1.1</span>
          <span>End: 9.1.1</span>
          <span>Length: 8.2.3</span>
          <span>(Duration: 0:19:260)</span>
        </StatusBox>
      </DawStatus>
    </DawBody>
  </Daw>
);

/* right edge of the sequencer */

const EdgeRow = styled.div<{ $height?: number }>`
  display: flex;
  ${(p) => (p.$height ? `height: ${p.$height}px;` : "flex: 1;")}
`;

const EdgeColumn = styled.div<{ $tone?: string }>`
  display: flex;
  flex: 1;
  flex-direction: column;
  background: ${(p) => p.$tone ?? "#2f3337"};
`;

const EdgeRail = styled.div`
  display: flex;
  flex: 0 0 20px;
  flex-direction: column;
  align-items: center;
  gap: 4px;
  padding: 3px 0 16px;
  background: #393b3f;
`;

const RailGroup = styled.div`
  display: flex;
  flex-direction: column;
  gap: 1px;
`;

const Block = styled.div<{ $height?: number; $tone: string }>`
  ${(p) => (p.$height ? `height: ${p.$height}px;` : "flex: 1;")}
  background: ${(p) => p.$tone};
`;

const TrackStrip = styled.div<{ $height: number; $meter?: string }>`
  height: ${(p) => p.$height}px;
  padding: 1px 4px 0 5px;
  border-bottom: 2px solid #303234;
  border-right: 2px solid #303335;
  background: #454647;
  display: grid;
  grid-template-columns: 33px 5px;
  justify-content: space-between;
  &::after {
    content: "";
    grid-column: 2;
    grid-row: 1;
    background: ${(p) => p.$meter ?? "#070707"};
  }
`;

const TrackControls = styled.div`
  grid-row: 1;
`;

const TrackButtons = styled.div`
  display: flex;
  justify-content: space-between;
`;

const TrackButton = styled.button<{ $tone?: string }>`
  width: 15px;
  height: 9px;
  background: ${(p) => p.$tone ?? "#37393a"};
  line-height: 9px;
`;

const TrackPan = styled.div`
  height: 8px;
  margin-top: 2px;
  border: 1px solid #333;
  line-height: 7px;
  text-align: center;
`;

const EdgeRuler = styled.div`
  display: flex;
  gap: 26px;
  height: 20px;
  padding: 4px 0 0 16px;
`;

const GridSize = styled.div`
  height: 36px;
  padding: 18px 10px 0 0;
  border-top: 1px solid #2c2d2e;
  color: #202122;
  font-size: 14px;
  line-height: 20px;
  text-align: right;
`;

const RecordBox = styled.div`
  display: flex;
  align-items: center;
  gap: 4px;
  height: 14px;
  padding: 0 4px;
  border: 2px solid #303133;
  border-radius: 3px;
  font-weight: 700;
`;

const DawRight = () => (
  <Daw aria-label="Sequencer mixer">
    <DawTitle />
    <DawBody>
      <Transport>
        <Spacer />
        <TransportBox $width={34}>1%</TransportBox>
        <TransportBox $width={20}>D F</TransportBox>
      </Transport>
      <EdgeRow $height={417}>
        <EdgeColumn>
          <Block $height={19} $tone="linear-gradient(90deg, #44474a 46px, #2f3337 46px)" />
          <Block $height={39} $tone="#2d3136" />
          {["#37393a", "#37393a", "#5a351a"].map((tone, i) => (
            <TrackStrip key={i} $height={58} $meter={i === 2 ? "linear-gradient(#070707 38px, #1f5a33 38px)" : undefined}>
              <TrackControls>
                <TrackButtons>
                  <TrackButton $tone={tone}>S</TrackButton>
                  <TrackButton $tone={i === 2 ? "#511022" : "#2d2f30"}>●</TrackButton>
                </TrackButtons>
                <TrackPan>C</TrackPan>
              </TrackControls>
            </TrackStrip>
          ))}
          {[1, 2].map((n) => (
            <TrackStrip key={n} $height={12}>
              <TrackControls>
                <TrackButtons>
                  <TrackButton>S</TrackButton>
                  {n === 2 && <TrackButton>●</TrackButton>}
                </TrackButtons>
              </TrackControls>
            </TrackStrip>
          ))}
          <Block $tone="#4b4b4b" />
          {["#27422c", "#27422c", "#54301c"].map((tone, i) => (
            <TrackStrip key={i} $height={12}>
              <TrackControls>
                <TrackButtons>
                  <TrackButton>S</TrackButton>
                  <TrackButton $tone={tone} aria-label="Track colour" />
                </TrackButtons>
              </TrackControls>
            </TrackStrip>
          ))}
          <Block $height={12} $tone="#2e3234" />
        </EdgeColumn>
        <EdgeRail>
          <RoundButton $color="#3f5a1c">≡</RoundButton>
          <RoundButton $color="#2b2d2e">○</RoundButton>
          <Track />
          <RailGroup>
            {["I", "R", "M"].map((g) => (
              <RoundButton key={g} $color="#5f6420">
                {g}
              </RoundButton>
            ))}
            <RoundButton $color="#55575a">D</RoundButton>
          </RailGroup>
        </EdgeRail>
      </EdgeRow>
      <EdgeRow>
        <EdgeColumn $tone="linear-gradient(90deg, #3b443e 13px, #444546 13px, #444546 60px, #37383a 60px)">
          <Block $height={8} $tone="#393b3d" />
          <EdgeRuler>
            <span>4</span>
            <span>4.2</span>
          </EdgeRuler>
          <svg width="60" height="154" aria-hidden="true">
            <rect y="12" width="13" height="8" fill="#4f0817" />
            {[30, 48, 75, 93, 110, 137].map((y) => (
              <rect key={y} y={y} width="60" height="9" fill="#000" opacity="0.070" />
            ))}
            <path d="M13.500 0V154M43.500 0V154" stroke="#383a3a" />
          </svg>
          <GridSize>1/8</GridSize>
          <Spacer />
          <DawStatus>
            <RecordBox>
              Record <span>■</span>
            </RecordBox>
            <RoundButton aria-label="Help" />
          </DawStatus>
        </EdgeColumn>
      </EdgeRow>
    </DawBody>
  </Daw>
);

/* ---------- watermark ---------- */

const Watermark = styled.div`
  position: absolute;
  top: 25px;
  right: 57px;
  display: flex;
  align-items: flex-start;
  opacity: 0.7;
  color: #fff;
  -webkit-text-stroke: 2px #fff;
  font-family: "DejaVu Sans", sans-serif;
  font-size: 46px;
  font-weight: 700;
  line-height: 46px;
  pointer-events: none;
`;

/* ---------- app ---------- */

export default function App() {
  return (
    <Desktop>
      <GlobalStyle />
      <DawLeft />
      <Sampler aria-label="Sampler instrument">
        <RackFrame>
          <Rack>
            <Panel $tone="#bbb0ac" $open>
              <TopStrip>
                <ModTab>
                  Mod
                  <IconButton aria-label="Close modulators">
                    <Cross />
                  </IconButton>
                </ModTab>
                <ParamGrid $pad="0 8px 9px 0">
                  <div />
                  <Param name="Volume" value="-6.0" unit="dB" angle={0} ground="#9c918c" glow={false} />
                  <Param name="Pan" value="center" angle={0} ground="#9c918c" glow={false} />
                  <Stack>
                    <RackButton $look="light">Phase Invert</RackButton>
                    <RackButton $look="light">L/R Swap</RackButton>
                  </Stack>
                  <div />
                  <Stack>
                    <RackButton $look="light">Channel routing</RackButton>
                    <Select label="Output" value="Output: default" look="light" />
                  </Stack>
                </ParamGrid>
              </TopStrip>
              <ModStrip>
                <Select label="Add modulator" value="add modulator ..." width="167px" />
              </ModStrip>
            </Panel>

            <SectionHead>
              <SmallButton aria-label="Expand instrument buses">
                <Triangle />
              </SmallButton>
              <SectionTitle>InstrumentBuses</SectionTitle>
            </SectionHead>
            <Divider />

            <SectionHead>
              <SmallButton aria-label="Close insert effects">
                <Cross />
              </SmallButton>
              <SectionTitle>InsertEffects</SectionTitle>
            </SectionHead>
            <FxPanel name="InsertFx" count={7} sends />

            <SectionHead>
              <SmallButton aria-label="Close send effects">
                <Cross />
              </SmallButton>
              <SectionTitle>SendEffects</SectionTitle>
            </SectionHead>
            <FxPanel name="SendFx" count={8} />

            <SectionHead>
              <SmallButton aria-label="Close modulation">
                <Cross />
              </SmallButton>
              <SectionTitle>Modulation</SectionTitle>
              <SmallButton aria-label="Collapse modulation">
                <CollapseIcon />
              </SmallButton>
            </SectionHead>
            <Panel $tone="#b9b0ab">
              <ModRow $line>
                <Side>
                  <ModName $height={28}>
                    pitch <CollapseIcon />
                  </ModName>
                  <SideTab $width={77} $cap>
                    Bypass
                  </SideTab>
                  <SideTab $width={77} $foot>
                    Preset <Triangle size={7} />
                  </SideTab>
                  <Spacer />
                  <SideTab $width={77} $cap>
                    Mod
                  </SideTab>
                </Side>
                <ParamGrid $pad="10px 8px 9px 0">
                  <Param name="Curve" value="-33" angle={-48} />
                  <Param name="Attack" value="143.5" unit="ms" angle={-2} />
                  <Param name="Hold" value="0.00" unit="ms" angle={-135} />
                  <Param name="Decay" value="591.7" unit="ms" angle={30} />
                  <Param name="Sustain" value="-oo" unit="dB" angle={-135} />
                  <Param name="Release" value="1.1k" unit="ms" angle={45} />
                  <Stack>
                    <RackButton>AHD Only</RackButton>
                    <RackButton $look="lit">Retrigger</RackButton>
                  </Stack>
                  <Display $span="2 / -1">
                    <svg width="589" height="46" role="img" aria-label="Envelope curve">
                      <path d="M4 45C28 40 50 18 63 4C76 26 96 42 134 45Z" fill="#575757" />
                      <path d="M4 45C28 40 50 18 63 4C76 26 96 42 134 45" fill="none" stroke="#d8a63c" strokeWidth="2" />
                    </svg>
                  </Display>
                </ParamGrid>
              </ModRow>
              <ModRow>
                <Side>
                  <ModName $height={27}>
                    formant <CollapseIcon />
                  </ModName>
                  <TabPair>
                    <SideTab $width={38}>Byp.</SideTab>
                    <SideTab $width={39} $cap>
                      Pre <Triangle size={6} />
                    </SideTab>
                  </TabPair>
                  <SideTab $width={77}>Mod</SideTab>
                </Side>
                <ParamGrid $pad="9px 8px 10px 0">
                  <Stack>
                    <Select label="Waveform" value="sine" />
                    <RackButton $look="lit">Retrigger</RackButton>
                  </Stack>
                  <Param
                    name="Freq."
                    value="1.0"
                    angle={58}
                    unit={
                      <svg width="14" height="18" viewBox="0 0 14 18" aria-label="note">
                        <ellipse cx="5" cy="14.500" rx="4" ry="3" fill="#f2cf45" />
                        <path d="M8 15V1Q8 5 12 7V12" fill="none" stroke="#f2cf45" strokeWidth="1.800" />
                      </svg>
                    }
                  />
                  <Param name="Fade in" value="0.00" unit="ms" angle={-135} />
                  <Param name="Phase" value="0" angle={-135} centred />
                  <div />
                  <Display>
                    <svg width="109" height="46" viewBox="0 0 109 46" role="img" aria-label="Sine wave">
                      <path
                        d="M3 24C10 -2 17 -2 24 24S38 50 45 24S59 -2 66 24S79 50 86 24S100 -2 107 24Z"
                        fill="#575757"
                      />
                      <path
                        d="M3 24C10 -2 17 -2 24 24S38 50 45 24S59 -2 66 24S79 50 86 24S100 -2 107 24"
                        fill="none"
                        stroke="#d8a63c"
                        strokeWidth="2.200"
                      />
                    </svg>
                  </Display>
                </ParamGrid>
              </ModRow>
            </Panel>
          </Rack>
        </RackFrame>
        <KeyShell>
          <KeyPanel>
            <WheelArea>
              <WheelNames>
                <span>Pitch</span>
                <span>Mod</span>
              </WheelNames>
              <Wheels />
              <Octave>
                <button aria-label="Octave down">
                  <svg width="5" height="8" aria-hidden="true">
                    <path d="M5 0V8L0 4Z" fill="#fff" />
                  </svg>
                </button>
                +2 oct
                <button aria-label="Octave up">
                  <svg width="5" height="8" aria-hidden="true">
                    <path d="M0 0V8L5 4Z" fill="#fff" />
                  </svg>
                </button>
              </Octave>
            </WheelArea>
            <Keyboard />
          </KeyPanel>
        </KeyShell>
      </Sampler>
      <DawRight />
      <Watermark>
        dubsp
        <svg width="38" height="42" viewBox="0 0 38 42" aria-label="o">
          <path d="M11 14Q2 20 3 30Q5 38 12 40Q20 43 28 39Q17 33 11 14Z" fill="#fff" />
          <path d="M14 15Q22 14 27 21Q28 27 26 34Q18 26 14 15Z" fill="#fff" />
          <ellipse cx="24" cy="22" rx="11" ry="20" transform="rotate(-24 24 22)" fill="none" stroke="#fff" strokeWidth="1.600" strokeDasharray="62 12 30" strokeDashoffset="-14" />
        </svg>
        t
      </Watermark>
      <Cursor width="17" height="25" viewBox="0 0 17 25" aria-hidden="true">
        <path d="M1.500 1.500V19L5.500 15.500L8.500 22.500L12 21L9 14.500H14.500Z" fill="#000" stroke="#fff" strokeWidth="1.400" />
      </Cursor>
    </Desktop>
  );
}
